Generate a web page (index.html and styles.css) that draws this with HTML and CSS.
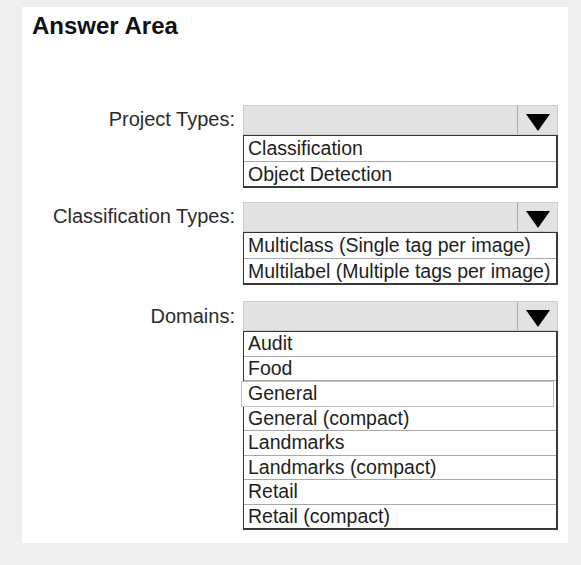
FILE: index.html
```html
<!DOCTYPE html>
<html>
<head>
<meta charset="utf-8">
<link rel="stylesheet" href="styles.css">
</head>
<body>
<div class="panel">
  <h1 class="title">Answer Area</h1>
  <div class="form">
    <div class="label">Project Types:</div>
    <div class="control">
      <div class="select"><div class="select-value"></div><div class="select-arrow"><svg width="24" height="17" viewBox="0 0 24 17"><polygon points="0,0 24,0 12,17" fill="#000"/></svg></div></div>
      <ul class="list">
        <li class="item">Classification</li>
        <li class="item">Object Detection</li>
      </ul>
    </div>

    <div class="label">Classification Types:</div>
    <div class="control">
      <div class="select"><div class="select-value"></div><div class="select-arrow"><svg width="24" height="17" viewBox="0 0 24 17"><polygon points="0,0 24,0 12,17" fill="#000"/></svg></div></div>
      <ul class="list">
        <li class="item">Multiclass (Single tag per image)</li>
        <li class="item">Multilabel (Multiple tags per image)</li>
      </ul>
    </div>

    <div class="label label-last">Domains:</div>
    <div class="control control-last">
      <div class="select"><div class="select-value"></div><div class="select-arrow"><svg width="24" height="17" viewBox="0 0 24 17"><polygon points="0,0 24,0 12,17" fill="#000"/></svg></div></div>
      <ul class="list list-long">
        <li class="item">Audit</li>
        <li class="item">Food</li>
        <li class="item item-focus">General</li>
        <li class="item">General (compact)</li>
        <li class="item">Landmarks</li>
        <li class="item">Landmarks (compact)</li>
        <li class="item">Retail</li>
        <li class="item">Retail (compact)</li>
      </ul>
    </div>
  </div>
</div>
</body>
</html>
```

FILE: styles.css
```css
html, body {
  margin: 0;
  padding: 0;
  background: #efefef;
}

body {
  width: 581px;
  height: 565px;
  overflow: hidden;
  font-family: "Liberation Sans", Arial, sans-serif;
}

.panel {
  margin: 7px 0 0 22px;
  width: 546px;
  height: 536px;
  background: #ffffff;
  box-sizing: border-box;
  padding-top: 5px;
}

.title {
  margin: 0 0 0 10px;
  font-size: 24px;
  line-height: 28px;
  font-weight: bold;
  color: #111;
}

.form {
  margin-top: 65px;
  display: grid;
  grid-template-columns: 213px 315px;
  column-gap: 8px;
  row-gap: 14px;
  align-items: start;
}

.label {
  text-align: right;
  font-size: 20px;
  line-height: 30px;
  color: #2b2b2b;
  margin-top: -1px;
}

.label-last,
.control-last {
  margin-top: 2px;
}

.control {
  display: flex;
  flex-direction: column;
}

.select {
  display: flex;
  height: 30px;
  box-sizing: border-box;
  border: 1px solid #cdcdcd;
  background: #e2e2e2;
}

.select-value {
  flex: 1;
}

.select-arrow {
  width: 40px;
  border-left: 1px solid #a9a9a9;
  display: flex;
  align-items: center;
  justify-content: center;
  padding-top: 4px;
  box-sizing: border-box;
}

.select-arrow svg {
  display: block;
}

.list {
  list-style: none;
  margin: 0;
  padding: 0;
  border-top: 1px solid #333;
  border-left: 1px solid #333;
  border-right: 2px solid #3a3a3a;
  border-bottom: 2px solid #3a3a3a;
  background: #fff;
}

.item {
  height: 24.5px;
  line-height: 24.5px;
  font-size: 19.5px;
  color: #1e1e1e;
  padding-left: 4px;
  border-bottom: 1px solid #a8a8a8;
  white-space: nowrap;
}

.item:last-child {
  border-bottom: none;
}

.list-long .item {
  height: 23.5px;
  line-height: 23.5px;
}

.item-focus {
  position: relative;
  margin-left: -3px;
  margin-right: 2px;
  padding-left: 6px;
  background: #fff;
  border: 1px solid #bdbdbd;
}

.list-long .item-focus {
  height: 23.5px;
}
```
